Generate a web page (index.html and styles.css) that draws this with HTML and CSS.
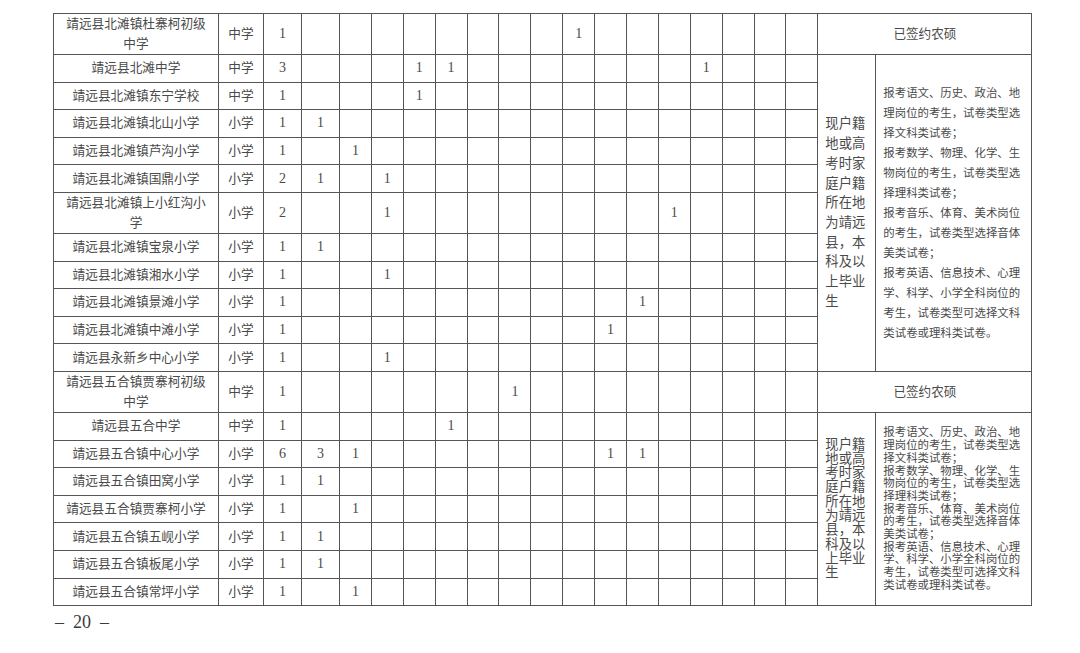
FILE: index.html
```html
<!DOCTYPE html>
<html lang="zh-CN">
<head>
<meta charset="utf-8">
<title>岗位表</title>
<link rel="stylesheet" href="styles.css">
</head>
<body>
<div class="page">
<table class="grid">
<colgroup>
<col class="w-name"><col class="w-type"><col class="w-count"><col class="w-first">
<col class="w-sub"><col class="w-sub"><col class="w-sub"><col class="w-sub"><col class="w-sub">
<col class="w-sub"><col class="w-sub"><col class="w-sub"><col class="w-sub"><col class="w-sub">
<col class="w-sub"><col class="w-sub"><col class="w-sub"><col class="w-sub"><col class="w-sub">
<col class="w-note"><col class="w-desc">
</colgroup>
<tbody>
<tr class="tall"><td class="name">靖远县北滩镇杜寨柯初级中学</td><td>中学</td><td class="num">1</td><td></td><td></td><td></td><td></td><td></td><td></td><td></td><td></td><td class="num">1</td><td></td><td></td><td></td><td></td><td></td><td></td><td></td><td class="signed" colspan="2">已签约农硕</td></tr>
<tr><td class="name">靖远县北滩中学</td><td>中学</td><td class="num">3</td><td></td><td></td><td></td><td class="num">1</td><td class="num">1</td><td></td><td></td><td></td><td></td><td></td><td></td><td></td><td class="num">1</td><td></td><td></td><td></td>
<td class="note note-a" rowspan="11">现户籍地或高考时家庭户籍所在地为靖远县，本科及以上毕业生</td>
<td class="desc desc-a" rowspan="11">报考语文、历史、政治、地理岗位的考生，试卷类型选择文科类试卷；<br>报考数学、物理、化学、生物岗位的考生，试卷类型选择理科类试卷；<br>报考音乐、体育、美术岗位的考生，试卷类型选择音体美类试卷；<br>报考英语、信息技术、心理学、科学、小学全科岗位的考生，试卷类型可选择文科类试卷或理科类试卷。</td></tr>
<tr><td class="name">靖远县北滩镇东宁学校</td><td>中学</td><td class="num">1</td><td></td><td></td><td></td><td class="num">1</td><td></td><td></td><td></td><td></td><td></td><td></td><td></td><td></td><td></td><td></td><td></td><td></td></tr>
<tr><td class="name">靖远县北滩镇北山小学</td><td>小学</td><td class="num">1</td><td class="num">1</td><td></td><td></td><td></td><td></td><td></td><td></td><td></td><td></td><td></td><td></td><td></td><td></td><td></td><td></td><td></td></tr>
<tr><td class="name">靖远县北滩镇芦沟小学</td><td>小学</td><td class="num">1</td><td></td><td class="num">1</td><td></td><td></td><td></td><td></td><td></td><td></td><td></td><td></td><td></td><td></td><td></td><td></td><td></td><td></td></tr>
<tr><td class="name">靖远县北滩镇国鼎小学</td><td>小学</td><td class="num">2</td><td class="num">1</td><td></td><td class="num">1</td><td></td><td></td><td></td><td></td><td></td><td></td><td></td><td></td><td></td><td></td><td></td><td></td><td></td></tr>
<tr class="tall"><td class="name">靖远县北滩镇上小红沟小学</td><td>小学</td><td class="num">2</td><td></td><td></td><td class="num">1</td><td></td><td></td><td></td><td></td><td></td><td></td><td></td><td></td><td class="num">1</td><td></td><td></td><td></td><td></td></tr>
<tr><td class="name">靖远县北滩镇宝泉小学</td><td>小学</td><td class="num">1</td><td class="num">1</td><td></td><td></td><td></td><td></td><td></td><td></td><td></td><td></td><td></td><td></td><td></td><td></td><td></td><td></td><td></td></tr>
<tr><td class="name">靖远县北滩镇湘水小学</td><td>小学</td><td class="num">1</td><td></td><td></td><td class="num">1</td><td></td><td></td><td></td><td></td><td></td><td></td><td></td><td></td><td></td><td></td><td></td><td></td><td></td></tr>
<tr><td class="name">靖远县北滩镇景滩小学</td><td>小学</td><td class="num">1</td><td></td><td></td><td></td><td></td><td></td><td></td><td></td><td></td><td></td><td></td><td class="num">1</td><td></td><td></td><td></td><td></td><td></td></tr>
<tr><td class="name">靖远县北滩镇中滩小学</td><td>小学</td><td class="num">1</td><td></td><td></td><td></td><td></td><td></td><td></td><td></td><td></td><td></td><td class="num">1</td><td></td><td></td><td></td><td></td><td></td><td></td></tr>
<tr><td class="name">靖远县永新乡中心小学</td><td>小学</td><td class="num">1</td><td></td><td></td><td class="num">1</td><td></td><td></td><td></td><td></td><td></td><td></td><td></td><td></td><td></td><td></td><td></td><td></td><td></td></tr>
<tr class="tall"><td class="name">靖远县五合镇贾寨柯初级中学</td><td>中学</td><td class="num">1</td><td></td><td></td><td></td><td></td><td></td><td></td><td class="num">1</td><td></td><td></td><td></td><td></td><td></td><td></td><td></td><td></td><td></td><td class="signed" colspan="2">已签约农硕</td></tr>
<tr><td class="name">靖远县五合中学</td><td>中学</td><td class="num">1</td><td></td><td></td><td></td><td></td><td class="num">1</td><td></td><td></td><td></td><td></td><td></td><td></td><td></td><td></td><td></td><td></td><td></td>
<td class="note note-b" rowspan="7">现户籍地或高考时家庭户籍所在地为靖远县，本科及以上毕业生</td>
<td class="desc desc-b" rowspan="7">报考语文、历史、政治、地理岗位的考生，试卷类型选择文科类试卷；<br>报考数学、物理、化学、生物岗位的考生，试卷类型选择理科类试卷；<br>报考音乐、体育、美术岗位的考生，试卷类型选择音体美类试卷；<br>报考英语、信息技术、心理学、科学、小学全科岗位的考生，试卷类型可选择文科类试卷或理科类试卷。</td></tr>
<tr><td class="name">靖远县五合镇中心小学</td><td>小学</td><td class="num">6</td><td class="num">3</td><td class="num">1</td><td></td><td></td><td></td><td></td><td></td><td></td><td></td><td class="num">1</td><td class="num">1</td><td></td><td></td><td></td><td></td><td></td></tr>
<tr><td class="name">靖远县五合镇田窝小学</td><td>小学</td><td class="num">1</td><td class="num">1</td><td></td><td></td><td></td><td></td><td></td><td></td><td></td><td></td><td></td><td></td><td></td><td></td><td></td><td></td><td></td></tr>
<tr><td class="name">靖远县五合镇贾寨柯小学</td><td>小学</td><td class="num">1</td><td></td><td class="num">1</td><td></td><td></td><td></td><td></td><td></td><td></td><td></td><td></td><td></td><td></td><td></td><td></td><td></td><td></td></tr>
<tr><td class="name">靖远县五合镇五岘小学</td><td>小学</td><td class="num">1</td><td class="num">1</td><td></td><td></td><td></td><td></td><td></td><td></td><td></td><td></td><td></td><td></td><td></td><td></td><td></td><td></td><td></td></tr>
<tr><td class="name">靖远县五合镇板尾小学</td><td>小学</td><td class="num">1</td><td class="num">1</td><td></td><td></td><td></td><td></td><td></td><td></td><td></td><td></td><td></td><td></td><td></td><td></td><td></td><td></td><td></td></tr>
<tr><td class="name">靖远县五合镇常坪小学</td><td>小学</td><td class="num">1</td><td></td><td class="num">1</td><td></td><td></td><td></td><td></td><td></td><td></td><td></td><td></td><td></td><td></td><td></td><td></td><td></td><td></td></tr>
</tbody>
</table>
<div class="page-no"><span>–</span><span>20</span><span>–</span></div>
</div>
</body>
</html>
```
FILE: styles.css
```css
html, body {
  margin: 0;
  padding: 0;
  background: #ffffff;
}
.page {
  padding: 13px 0 0 53px;
  font-family: "Liberation Serif", "Noto Sans CJK SC", serif;
  color: #4a4a4a;
}
.grid {
  border-collapse: collapse;
  table-layout: fixed;
  width: 979px;
}
.w-name { width: 165px; }
.w-type { width: 45px; }
.w-count { width: 38px; }
.w-first { width: 38px; }
.w-sub { width: 31.9px; }
.w-note { width: 58px; }
.w-desc { width: 156px; }
.grid td {
  border: 1px solid #555555;
  height: 27.6px;
  padding: 0;
  text-align: center;
  vertical-align: middle;
  font-size: 12.7px;
  line-height: 20px;
  box-sizing: border-box;
}
.grid tr.tall td {
  height: 40.5px;
}
.grid td.name {
  padding: 0 7px;
}
.grid td.num {
  font-size: 14px;
}
.grid td.signed {
  font-size: 12.6px;
}
.grid td.note {
  text-align: left;
  padding: 0 7px;
  font-size: 13.3px;
}
.grid td.note-a { line-height: 19.7px; }
.grid td.note-b { line-height: 14.3px; }
.grid td.desc {
  text-align: left;
  padding: 0 8px 0 7px;
  font-size: 11.4px;
}
.grid td.desc-a { line-height: 20px; }
.grid td.desc-b { line-height: 12.7px; }
.page-no {
  display: flex;
  gap: 9px;
  align-items: center;
  margin-top: 5px;
  padding-left: 2px;
  font-size: 18px;
  line-height: 22px;
  color: #3c3c3c;
}
```
